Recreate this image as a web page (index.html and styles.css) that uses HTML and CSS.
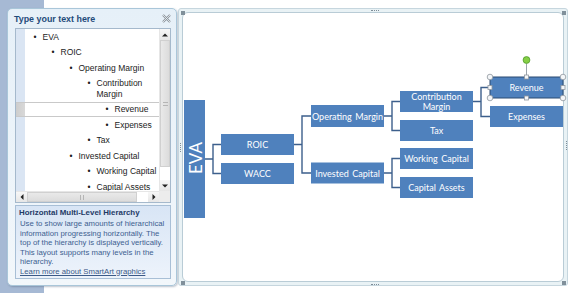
FILE: index.html
```html
<!DOCTYPE html>
<html>
<head>
<meta charset="utf-8">
<link rel="stylesheet" href="styles.css">
</head>
<body>
<div class="stage">
  <div class="pane">
    <div class="pane-head">
      <span class="pane-title">Type your text here</span>
      <svg class="close" width="9" height="9" viewBox="0 0 9 9"><path d="M1 1 L8 8 M8 1 L1 8" stroke="#8d959c" stroke-width="2.2"/><path d="M1 1 L8 8 M8 1 L1 8" stroke="#eef4f8" stroke-width="0.8"/></svg>
    </div>
    <div class="listbox">
      <ul class="items">
        <li class="l1"><span>EVA</span></li>
        <li class="l2"><span>ROIC</span></li>
        <li class="l3"><span>Operating Margin</span></li>
        <li class="l4"><span>Contribution Margin</span></li>
        <li class="l5 sel"><span>Revenue</span></li>
        <li class="l5"><span>Expenses</span></li>
        <li class="l4"><span>Tax</span></li>
        <li class="l3"><span>Invested Capital</span></li>
        <li class="l4"><span>Working Capital</span></li>
        <li class="l4"><span>Capital Assets</span></li>
      </ul>
      <div class="vscroll">
        <div class="sb-btn up"></div>
        <div class="v-thumb"><i class="grip-h"></i></div>
        <div class="v-rest"></div>
        <div class="sb-btn down"></div>
      </div>
      <div class="hscroll">
        <div class="sb-btn left"></div>
        <div class="h-thumb"><i class="grip-v"></i></div>
        <div class="h-rest"></div>
        <div class="sb-btn right"></div>
      </div>
      <div class="corner"></div>
    </div>
    <div class="desc">
      <div class="desc-title">Horizontal Multi-Level Hierarchy</div>
      <div class="desc-text">Use to show large amounts of hierarchical<br>information progressing horizontally. The<br>top of the hierarchy is displayed vertically.<br>This layout supports many levels in the<br>hierarchy.</div>
      <a class="desc-link">Learn more about SmartArt graphics</a>
    </div>
  </div>

  <div class="frame">
    <div class="canvas">
      <svg width="380" height="268" viewBox="183 13 380 268">
        <g class="lines" fill="none" stroke="#3d5f8c" stroke-width="1.4">
          <path d="M205 159 H213 M221 144.5 H213 V173.5 H221"/>
          <path d="M294 144.5 H302 M311 116 H302 V173 H311"/>
          <path d="M384 116 H392 M400 101.5 H392 V130.5 H400"/>
          <path d="M384 173 H392 M400 158.5 H392 V187.5 H400"/>
          <path d="M473 101.5 H481 M490 87.5 H481 V116.5 H490"/>
        </g>
        <g class="boxes" fill="#4f81bd">
          <rect x="184" y="100" width="21" height="118"/>
          <rect x="221" y="134" width="73" height="21"/>
          <rect x="221" y="163" width="73" height="21"/>
          <rect x="311" y="105" width="73" height="22"/>
          <rect x="311" y="162.5" width="73" height="21"/>
          <rect x="400" y="91" width="73" height="21"/>
          <rect x="400" y="120" width="73" height="21"/>
          <rect x="400" y="148" width="73" height="21"/>
          <rect x="400" y="177" width="73" height="21"/>
          <rect x="490" y="77" width="73" height="21" stroke="#2b4a73" stroke-width="1"/>
          <rect x="490" y="106" width="73" height="21"/>
        </g>
        <g class="labels">
          <text class="eva" x="0" y="0" transform="translate(195 158) rotate(-90)">EVA</text>
          <text x="257.5" y="144.5">ROIC</text>
          <text x="257.5" y="173.5">WACC</text>
          <text x="347.5" y="116" class="sp">Operating Margin</text>
          <text x="347.5" y="173" class="sp">Invested Capital</text>
          <text x="436.5" y="96.5">Contribution</text>
          <text x="436.5" y="106.5">Margin</text>
          <text x="436.5" y="130.5">Tax</text>
          <text x="436.5" y="158.5" class="sp">Working Capital</text>
          <text x="436.5" y="187.5" class="sp">Capital Assets</text>
          <text x="526.5" y="87.5">Revenue</text>
          <text x="526.5" y="116.5">Expenses</text>
        </g>
        <g class="handles">
          <line x1="526.5" y1="63.5" x2="526.5" y2="75" stroke="#9aa3ab" stroke-width="1"/>
          <circle cx="526.5" cy="60" r="3.4" fill="#86cf45" stroke="#4f9a2c" stroke-width="0.8"/>
          <circle cx="490" cy="77" r="2.8" fill="#f4f6f8" stroke="#8f979e" stroke-width="0.8"/>
          <circle cx="563" cy="77" r="2.8" fill="#f4f6f8" stroke="#8f979e" stroke-width="0.8"/>
          <circle cx="490" cy="98" r="2.8" fill="#f4f6f8" stroke="#8f979e" stroke-width="0.8"/>
          <circle cx="563" cy="98" r="2.8" fill="#f4f6f8" stroke="#8f979e" stroke-width="0.8"/>
          <rect x="524.5" y="75" width="4" height="4" fill="#f4f6f8" stroke="#8f979e" stroke-width="0.8"/>
          <rect x="524.5" y="96" width="4" height="4" fill="#f4f6f8" stroke="#8f979e" stroke-width="0.8"/>
          <rect x="488" y="85.5" width="4" height="4" fill="#f4f6f8" stroke="#8f979e" stroke-width="0.8"/>
          <rect x="561" y="85.5" width="4" height="4" fill="#f4f6f8" stroke="#8f979e" stroke-width="0.8"/>
        </g>
      </svg>
    </div>
    <i class="dots dh top-mid"></i>
    <i class="dots dh bot-mid"></i>
    <i class="dots dv left-mid"></i>
    <i class="dots dv right-mid"></i>
    <i class="cdot tl"></i>
    <i class="cdot tr"></i>
    <i class="cdot bl"></i>
    <i class="cdot br"></i>
  </div>
</div>
</body>
</html>
```

FILE: styles.css
```css
* { box-sizing: border-box; }
html, body { margin: 0; height: 100%; }
body {
  background: linear-gradient(to right, #a6b9d4 0, #a6b9d4 44px, #ffffff 44px);
  font-family: "Liberation Sans", Arial, sans-serif;
  overflow: hidden;
}
.stage {
  display: flex;
  align-items: flex-start;
  padding: 8px 0 0 7px;
}

/* ---------- text pane ---------- */
.pane {
  width: 170px;
  height: 278px;
  border: 1px solid #a9c6d9;
  border-radius: 5px;
  background: linear-gradient(#e6f0f8, #f2f7fb);
  box-shadow: 1px 1px 2px rgba(60, 80, 110, .35);
  padding: 0 5px 0 7px;
  display: flex;
  flex-direction: column;
}
.pane-head {
  height: 19px;
  display: flex;
  align-items: center;
  justify-content: space-between;
  margin-left: -1px;
}
.pane-title {
  font-size: 8.9px;
  font-weight: bold;
  color: #1f4b7a;
}
.close { display: block; }

.listbox {
  width: 156px;
  height: 175px;
  border: 1px solid #a5b9cc;
  background: #fff;
  display: grid;
  grid-template-columns: 143px 11px;
  grid-template-rows: 162px 11px;
}
.items {
  list-style: none;
  margin: 0;
  padding: 0;
  overflow: hidden;
  background: linear-gradient(to right, #dae5f3 0, #dae5f3 9px, #fff 9px);
}
.items li {
  display: flex;
  font-size: 8.5px;
  line-height: 10.5px;
  padding-top: 2.5px;
  padding-bottom: 2.5px;
  padding-right: 2px;
  color: #1c1c1c;
}
.items li::before {
  content: "\2022";
  flex: 0 0 9px;
}
.items .l1 { padding-left: 17.5px; }
.items .l2 { padding-left: 35.5px; }
.items .l3 { padding-left: 53.5px; }
.items .l4 { padding-left: 71.5px; }
.items .l5 { padding-left: 89.5px; }
.items .sel {
  background: linear-gradient(to right, #cdcdcd 0, #d9d9d9 9px, #fff 9px);
  box-shadow: inset 0 1px #c9c9c9, inset 0 -1px #c9c9c9;
}

.vscroll {
  display: flex;
  flex-direction: column;
  background: #fff;
  border-left: 1px solid #e6e6e6;
}
.hscroll {
  display: flex;
  background: #fff;
  border-top: 1px solid #e6e6e6;
}
.corner { background: #ececec; }
.sb-btn {
  flex: 0 0 11px;
  background: linear-gradient(#f7f7f7, #e6e6e6);
  position: relative;
}
.sb-btn::after {
  content: "";
  position: absolute;
  left: 50%;
  top: 50%;
  width: 0;
  height: 0;
  border: 3px solid transparent;
}
.sb-btn.up::after { border-bottom: 3px solid #222; transform: translate(-50%, -75%); }
.sb-btn.down::after { border-top: 3px solid #222; transform: translate(-50%, -25%); }
.sb-btn.left::after { border-right: 3px solid #222; transform: translate(-75%, -50%); }
.sb-btn.right::after { border-left: 3px solid #222; transform: translate(-25%, -50%); }
.v-thumb {
  flex: 0 0 127px;
  background: linear-gradient(to right, #e9e9e9, #dcdcdc);
  border: 1px solid #d0d0d0;
  display: flex;
  align-items: center;
  justify-content: center;
}
.v-rest { flex: 1; }
.h-thumb {
  flex: 0 0 110px;
  background: linear-gradient(#e9e9e9, #dcdcdc);
  border: 1px solid #d0d0d0;
  display: flex;
  align-items: center;
  justify-content: center;
}
.h-rest { flex: 1; }
.grip-h { width: 5px; height: 4px; border-top: 1px solid #b5b5b5; border-bottom: 1px solid #b5b5b5; }
.grip-v { width: 4px; height: 5px; border-left: 1px solid #b5b5b5; border-right: 1px solid #b5b5b5; }

.desc {
  margin-top: 2px;
  width: 156px;
  height: 74px;
  border: 1px solid #a8bfd6;
  background: linear-gradient(#d8e5f5, #edf3fb);
  padding: 2px 3px 0 3px;
}
.desc-title {
  font-size: 7.9px;
  font-weight: bold;
  line-height: 10px;
  color: #1f3a66;
  white-space: nowrap;
}
.desc-text {
  margin-top: 1px;
  padding-left: 1px;
  font-size: 7.75px;
  line-height: 9.5px;
  color: #405f90;
  white-space: nowrap;
}
.desc-link {
  display: block;
  padding-left: 1px;
  font-size: 7.75px;
  line-height: 9.5px;
  color: #3b5a88;
  text-decoration: underline;
  white-space: nowrap;
}

/* ---------- diagram frame ---------- */
.frame {
  position: relative;
  margin-left: 1px;
  width: 390px;
  height: 278px;
  border: 1px solid #c6d6de;
  border-radius: 3px;
  background: #e9f2f5;
  padding: 3px;
}
.canvas {
  height: 100%;
  border: 1px solid #b9ccd6;
  border-radius: 6px;
  background: #fff;
}
.canvas svg { display: block; overflow: visible; }
.labels text {
  font-family: Lato, "Liberation Sans", sans-serif;
  font-size: 9px;
  fill: #fff;
  text-anchor: middle;
  dominant-baseline: central;
}
.labels text.sp { word-spacing: 1.2px; }
.labels text.eva { font-size: 17px; }

.dots { position: absolute; }
.dh { width: 8px; height: 0; border-top: 1.5px dotted #7e8d98; }
.dv { width: 0; height: 9px; border-left: 1.5px dotted #7e8d98; }
.top-mid { left: 192px; top: 1px; }
.bot-mid { left: 192px; bottom: 0px; }
.left-mid { left: 1px; top: 134px; }
.right-mid { right: 0px; top: 132px; }
.cdot {
  position: absolute;
  width: 4px;
  height: 4px;
  background:
    radial-gradient(circle, #7e8d98 0.7px, transparent 1px) 0 0 / 2px 2px;
}
.tl { left: 2px; top: 2px; }
.tr { right: 1px; top: 2px; }
.bl { left: 2px; bottom: 0px; }
.br { right: 1px; bottom: 0px; }
```
